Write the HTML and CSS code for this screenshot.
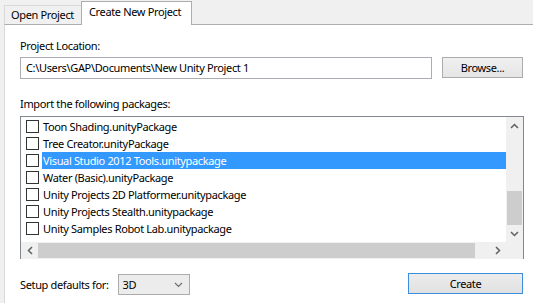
FILE: index.html
```html
<!DOCTYPE html>
<html>
<head>
<meta charset="utf-8">
<link rel="stylesheet" href="styles.css">
</head>
<body>
<div class="window">
  <div class="tabs">
    <div class="tab">Open Project</div>
    <div class="tab active">Create New Project</div>
  </div>
  <div class="panel">
    <div class="label">Project Location:</div>
    <div class="loc-row">
      <div class="input">C:\Users\GAP\Documents\New Unity Project 1</div>
      <div class="btn browse">Browse...</div>
    </div>
    <div class="label import">Import the following packages:</div>
    <div class="list">
      <div class="items">
        <div class="row"><span class="check"></span><span class="name">Toon Shading.unityPackage</span></div>
        <div class="row"><span class="check"></span><span class="name">Tree Creator.unityPackage</span></div>
        <div class="row selected"><span class="check"></span><span class="name">Visual Studio 2012 Tools.unitypackage</span></div>
        <div class="row"><span class="check"></span><span class="name">Water (Basic).unityPackage</span></div>
        <div class="row"><span class="check"></span><span class="name">Unity Projects 2D Platformer.unitypackage</span></div>
        <div class="row"><span class="check"></span><span class="name">Unity Projects Stealth.unitypackage</span></div>
        <div class="row"><span class="check"></span><span class="name">Unity Samples Robot Lab.unitypackage</span></div>
      </div>
      <div class="vscroll">
        <div class="sbtn"><svg width="9" height="6" viewBox="0 0 9 6"><path d="M1 5 L4.5 1.5 L8 5" fill="none" stroke="#606060" stroke-width="1.5"/></svg></div>
        <div class="vtrack"><div class="vthumb"></div></div>
        <div class="sbtn"><svg width="9" height="6" viewBox="0 0 9 6"><path d="M1 1 L4.5 4.5 L8 1" fill="none" stroke="#606060" stroke-width="1.5"/></svg></div>
      </div>
      <div class="hscroll">
        <div class="sbtn"><svg width="6" height="9" viewBox="0 0 6 9"><path d="M5 1 L1.5 4.5 L5 8" fill="none" stroke="#606060" stroke-width="1.5"/></svg></div>
        <div class="htrack"><div class="hthumb"></div></div>
        <div class="sbtn"><svg width="6" height="9" viewBox="0 0 6 9"><path d="M1 1 L4.5 4.5 L1 8" fill="none" stroke="#606060" stroke-width="1.5"/></svg></div>
      </div>
      <div class="corner"></div>
    </div>
    <div class="bottom-row">
      <span class="label">Setup defaults for:</span>
      <div class="select"><span>3D</span><svg width="9" height="6" viewBox="0 0 9 6"><path d="M1 1 L4.5 4.5 L8 1" fill="none" stroke="#707070" stroke-width="1.2"/></svg></div>
      <div class="spacer"></div>
      <div class="btn create">Create</div>
    </div>
  </div>
</div>
</body>
</html>
```
FILE: styles.css
```css
* { box-sizing: border-box; }
html, body { margin: 0; padding: 0; }
body {
  width: 533px;
  height: 303px;
  overflow: hidden;
  background: #f0f0f0;
  font-family: "Noto Sans", "DejaVu Sans", sans-serif;
  font-size: 11px;
  letter-spacing: -0.35px;
  color: #000;
}
.window { display: flex; flex-direction: column; height: 100%; }
.tabs {
  display: flex;
  align-items: flex-end;
  height: 24px;
  padding-left: 4px;
  position: relative;
  z-index: 1;
}
.tab {
  height: 19px;
  line-height: 17px;
  padding: 0 7px 0 6px;
  border: 1px solid #d9d9d9;
  border-bottom: none;
  background: #f0f0f0;
}
.tab.active {
  height: 24px;
  line-height: 20px;
  background: #fff;
  margin-bottom: -1px;
  margin-left: -1px;
  padding: 0 10px 0 7px;
  border-color: #adadad;
}
.panel {
  flex: 1;
  margin-left: 4px;
  background: #fff;
  border-top: 1px solid #adadad;
  border-left: 1px solid #d9d9d9;
  padding: 13px 10px 0 15px;
}
.label { line-height: 15px; }
.loc-row {
  display: flex;
  margin-top: 4px;
  gap: 10px;
}
.input {
  width: 412px;
  height: 22px;
  border: 1px solid #abadb3;
  line-height: 20px;
  padding-left: 5px;
}
.btn {
  border: 1px solid #acacac;
  background: linear-gradient(#f0f0f0, #e5e5e5);
  text-align: center;
}
.browse {
  width: 81px;
  height: 21px;
  line-height: 19px;
}
.import { margin-top: 17px; }
.list {
  margin-top: 5px;
  width: 504px;
  height: 143px;
  border: 1px solid #828790;
  display: grid;
  grid-template-columns: 1fr 17px;
  grid-template-rows: 1fr 17px;
}
.items { padding-top: 1px; overflow: hidden; }
.row {
  display: flex;
  align-items: center;
  height: 17px;
  padding-left: 5px;
}
.check {
  width: 13px;
  height: 13px;
  border: 1px solid #333;
  background: #fff;
  flex: none;
}
.name {
  margin-left: 3px;
  height: 17px;
  line-height: 17px;
  padding-left: 1px;
  flex: 1;
}
.selected .name { background: #3399ff; color: #fff; }
.vscroll {
  background: #f0f0f0;
  display: flex;
  flex-direction: column;
}
.sbtn {
  width: 17px;
  height: 17px;
  display: flex;
  align-items: center;
  justify-content: center;
  flex: none;
}
.vtrack { flex: 1; padding: 57px 1px 0 1px; }
.vthumb { height: 34px; background: #cdcdcd; }
.hscroll {
  background: #f0f0f0;
  display: flex;
}
.htrack { flex: 1; padding: 1px 14px 1px 0; }
.hthumb { height: 15px; background: #cdcdcd; }
.corner { background: #f0f0f0; }
.bottom-row {
  display: flex;
  align-items: center;
  margin-top: 15px;
}
.select {
  margin-left: 9px;
  width: 72px;
  height: 21px;
  border: 1px solid #acacac;
  background: #ececec;
  display: flex;
  align-items: center;
  justify-content: space-between;
  padding: 0 6px 0 4px;
}
.spacer { flex: 1; }
.create {
  width: 115px;
  height: 21px;
  line-height: 19px;
  border-color: #3c8ce0;
  background: linear-gradient(#ececec, #e1e1e1);
  margin-top: -3px;
}
```
